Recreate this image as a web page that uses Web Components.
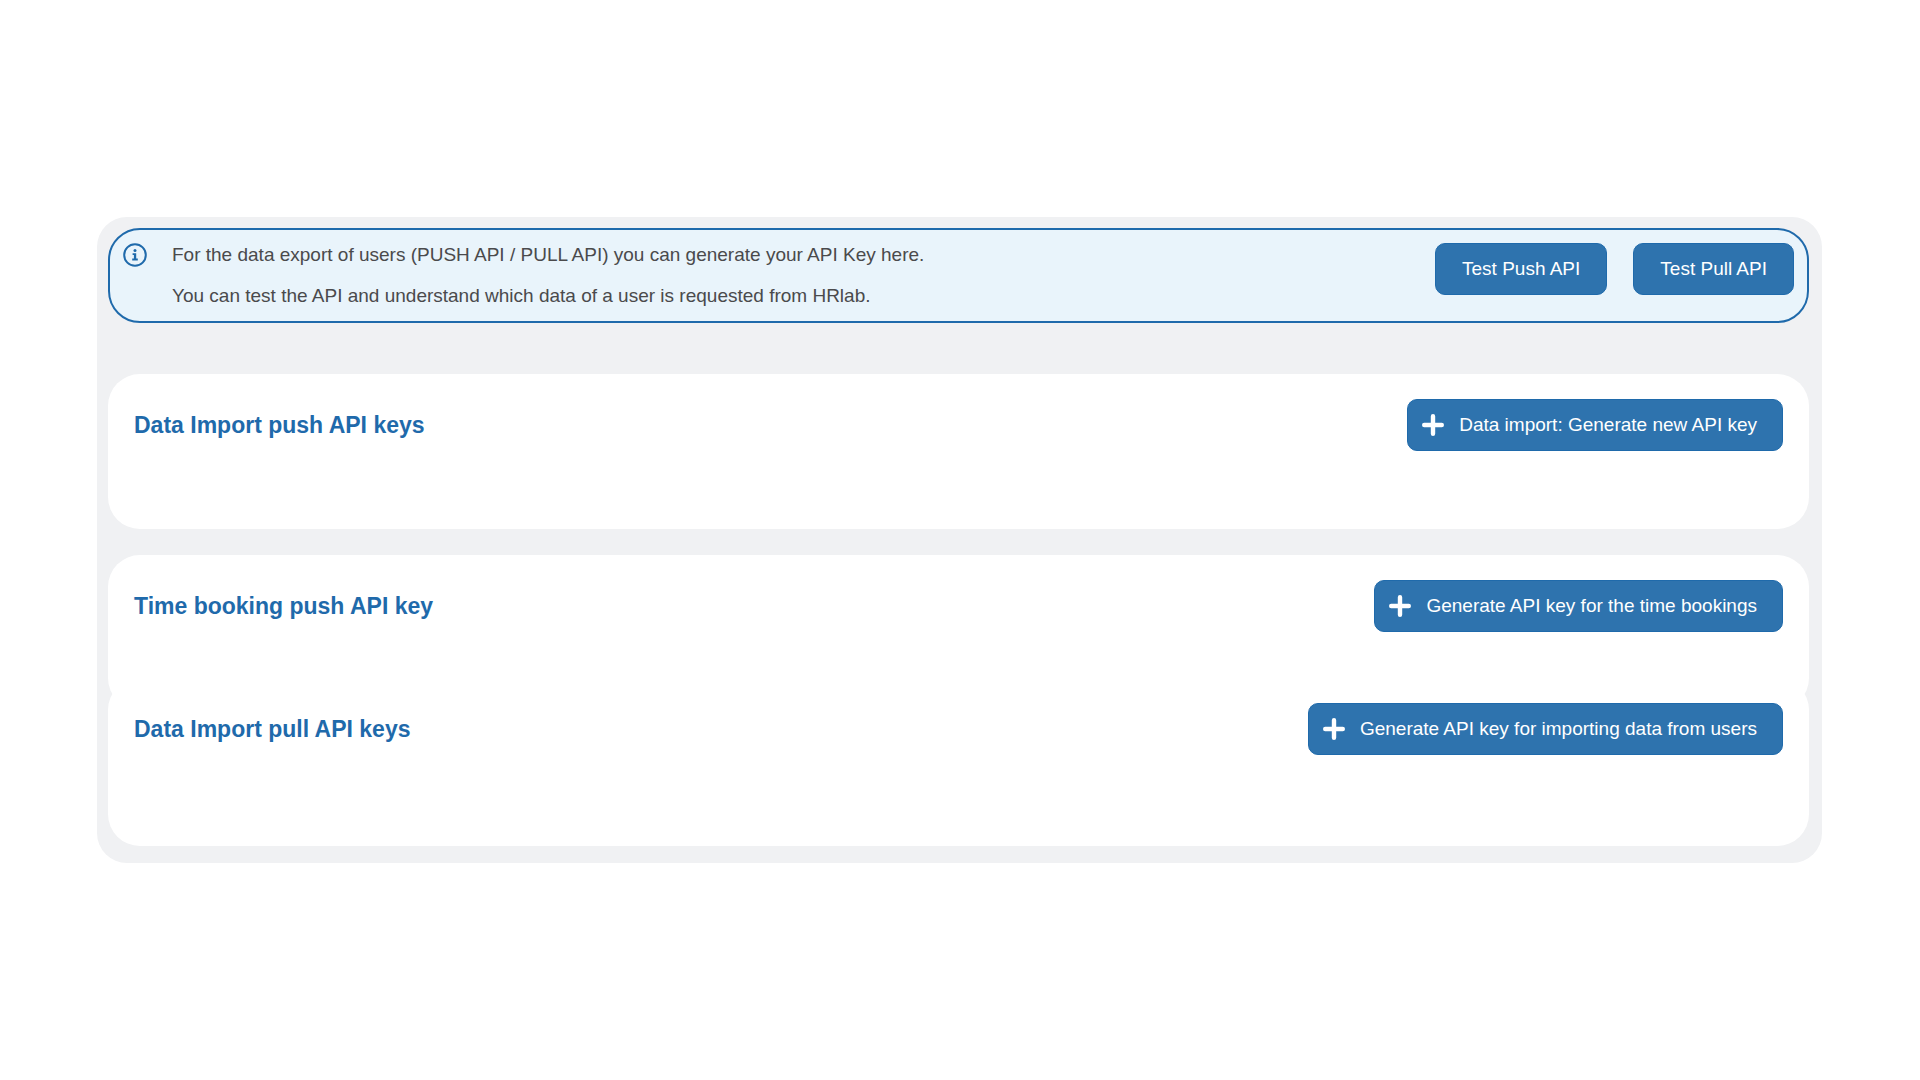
<!DOCTYPE html>
<html lang="en">
<head>
<meta charset="UTF-8">
<meta name="viewport" content="width=device-width, initial-scale=1">
<title>API keys</title>
<style>
    body {
        --blue: #1f6aab;
        --button: #2e73ae;
        margin: 0;
        padding: 0 98px 0 97px;
        min-height: 100vh;
        box-sizing: border-box;
        display: flex;
        flex-direction: column;
        justify-content: center;
        background: #fff;
        color: #4a4a4c;
        font-family: "Liberation Sans", Arial, Helvetica, sans-serif;
        font-size: 19px;
    }
</style>
</head>
<body>
<api-settings></api-settings>

<script>
class ApiButton extends HTMLElement {
    constructor() {
        super();
        this.attachShadow({ mode: 'open' });
    }

    connectedCallback() {
        const plus = this.hasAttribute('plus') ? `
        <svg width="22" height="22" viewBox="0 0 22 22" aria-hidden="true">
            <path d="M11 2.2v17.6M2.2 11h17.6" stroke="#fff" stroke-width="4.4" stroke-linecap="round"/>
        </svg>` : '';

        this.shadowRoot.innerHTML = `
        <style>
            :host {
                display: block;
                flex: none;
            }
            button {
                display: flex;
                align-items: center;
                gap: 15px;
                height: 52px;
                padding: 0 26px;
                border: 1px solid var(--blue);
                border-radius: 10px;
                box-sizing: border-box;
                background: var(--button);
                color: #fff;
                font: inherit;
                line-height: 24px;
                white-space: nowrap;
                cursor: pointer;
            }
            :host([plus]) button {
                padding: 0 25px 0 14px;
            }
            svg {
                flex: none;
            }
            button:hover {
                background: var(--blue);
            }
        </style>
        <button type="button">${plus}<slot></slot></button>
        `;
    }
}
customElements.define('api-button', ApiButton);

class InfoBanner extends HTMLElement {
    constructor() {
        super();
        this.attachShadow({ mode: 'open' });
    }

    connectedCallback() {
        this.shadowRoot.innerHTML = `
        <style>
            :host {
                display: flex;
                align-items: flex-start;
                gap: 25px;
                padding: 13px;
                border: 2px solid var(--blue);
                border-radius: 32px;
                background: #e9f4fb;
            }
            svg {
                flex: none;
            }
            .text {
                flex: 1;
                display: flex;
                flex-direction: column;
                gap: 17px;
                line-height: 24px;
            }
            .actions {
                display: flex;
                gap: 26px;
            }
        </style>
        <svg width="24" height="24" viewBox="0 0 24 24" fill="none" aria-hidden="true">
            <circle cx="12" cy="12" r="10.8" stroke="#1f6aab" stroke-width="2"/>
            <circle cx="12" cy="7.4" r="1.5" fill="#1f6aab"/>
            <path d="M9.6 10.2h3.6v5.4h1.6v1.8H9.2v-1.8h1.7V12H9.6z" fill="#1f6aab"/>
        </svg>
        <div class="text"><slot></slot></div>
        <div class="actions"><slot name="actions"></slot></div>
        `;
    }
}
customElements.define('info-banner', InfoBanner);

class KeyCard extends HTMLElement {
    constructor() {
        super();
        this.attachShadow({ mode: 'open' });
    }

    connectedCallback() {
        this.shadowRoot.innerHTML = `
        <style>
            :host {
                display: block;
                padding: 25px 26px 78px;
                border-radius: 32px;
                background: #fff;
            }
            header {
                display: flex;
                align-items: center;
                justify-content: space-between;
                gap: 26px;
            }
            h2 {
                margin: 0;
                color: var(--blue);
                font-size: 23px;
                line-height: 28px;
            }
        </style>
        <header>
            <h2><slot name="title"></slot></h2>
            <slot name="action"></slot>
        </header>
        <slot></slot>
        `;
    }
}
customElements.define('key-card', KeyCard);

class ApiSettings extends HTMLElement {
    constructor() {
        super();
        this.attachShadow({ mode: 'open' });
    }

    connectedCallback() {
        this.shadowRoot.innerHTML = `
        <style>
            :host {
                display: block;
            }
            main {
                padding: 11px 13px 17px 11px;
                border-radius: 30px;
                background: #f0f1f3;
            }
            p {
                margin: 0;
            }
            info-banner {
                margin-bottom: 51px;
            }
            .push {
                margin-bottom: 26px;
            }
            /* pull keys continue the time booking card */
            .pull {
                margin-top: -32px;
                padding-bottom: 91px;
            }
        </style>
        <main>
            <info-banner>
                <p>For the data export of users (PUSH API / PULL API) you can generate your API Key here.</p>
                <p>You can test the API and understand which data of a user is requested from HRlab.</p>
                <api-button slot="actions">Test Push API</api-button>
                <api-button slot="actions">Test Pull API</api-button>
            </info-banner>
            <key-card class="push">
                <span slot="title">Data Import push API keys</span>
                <api-button slot="action" plus>Data import: Generate new API key</api-button>
            </key-card>
            <key-card>
                <span slot="title">Time booking push API key</span>
                <api-button slot="action" plus>Generate API key for the time bookings</api-button>
            </key-card>
            <key-card class="pull">
                <span slot="title">Data Import pull API keys</span>
                <api-button slot="action" plus>Generate API key for importing data from users</api-button>
            </key-card>
        </main>
        `;
    }
}
customElements.define('api-settings', ApiSettings);
</script>
</body>
</html>
